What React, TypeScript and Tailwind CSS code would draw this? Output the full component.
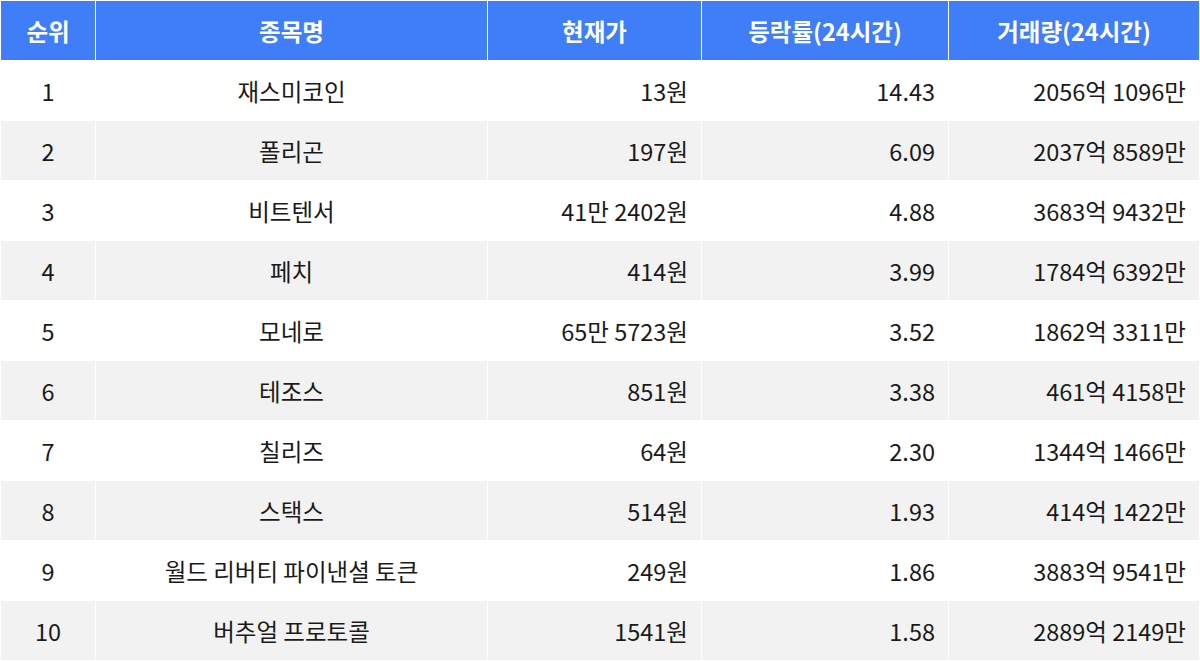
import React from 'react';

type Row = { rank: number; name: string; price: string; change: string; volume: string };

const rows: Row[] = [
  { rank: 1, name: '재스미코인', price: '13원', change: '14.43', volume: '2056억 1096만' },
  { rank: 2, name: '폴리곤', price: '197원', change: '6.09', volume: '2037억 8589만' },
  { rank: 3, name: '비트텐서', price: '41만 2402원', change: '4.88', volume: '3683억 9432만' },
  { rank: 4, name: '페치', price: '414원', change: '3.99', volume: '1784억 6392만' },
  { rank: 5, name: '모네로', price: '65만 5723원', change: '3.52', volume: '1862억 3311만' },
  { rank: 6, name: '테조스', price: '851원', change: '3.38', volume: '461억 4158만' },
  { rank: 7, name: '칠리즈', price: '64원', change: '2.30', volume: '1344억 1466만' },
  { rank: 8, name: '스택스', price: '514원', change: '1.93', volume: '414억 1422만' },
  { rank: 9, name: '월드 리버티 파이낸셜 토큰', price: '249원', change: '1.86', volume: '3883억 9541만' },
  { rank: 10, name: '버추얼 프로토콜', price: '1541원', change: '1.58', volume: '2889억 2149만' },
];

const App: React.FC = () => {
  return (
    <div className="w-[1200px] h-[661px] bg-white font-['Noto_Sans_CJK_KR','Noto_Sans',sans-serif] text-[23.5px] leading-none text-[#1a1a1a]">
      <table className="w-full table-fixed border-separate border-spacing-[1px]">
        <colgroup>
          <col className="w-[94px]" />
          <col className="w-[391px]" />
          <col className="w-[213px]" />
          <col className="w-[246px]" />
          <col />
        </colgroup>
        <thead>
          <tr className="h-[59px] bg-[#3f7ef6] text-white">
            <th className="text-center font-bold pt-[3px]">순위</th>
            <th className="text-center font-bold pt-[3px]">종목명</th>
            <th className="text-center font-bold pt-[3px]">현재가</th>
            <th className="text-center font-bold pt-[3px]">등락률(24시간)</th>
            <th className="text-center font-bold pt-[3px]">거래량(24시간)</th>
          </tr>
        </thead>
        <tbody>
          {rows.map((r, i) => (
            <tr key={r.rank} className={`h-[59px] ${i % 2 === 1 ? 'bg-[#f2f2f2]' : 'bg-white'}`}>
              <td className="text-center pt-[2px]">{r.rank}</td>
              <td className="text-center pt-[2px]">{r.name}</td>
              <td className="text-right pr-[13px] pt-[2px]">{r.price}</td>
              <td className="text-right pr-[13px] pt-[2px]">{r.change}</td>
              <td className="text-right pr-[13px] pt-[2px]">{r.volume}</td>
            </tr>
          ))}
        </tbody>
      </table>
    </div>
  );
};

export default App;
